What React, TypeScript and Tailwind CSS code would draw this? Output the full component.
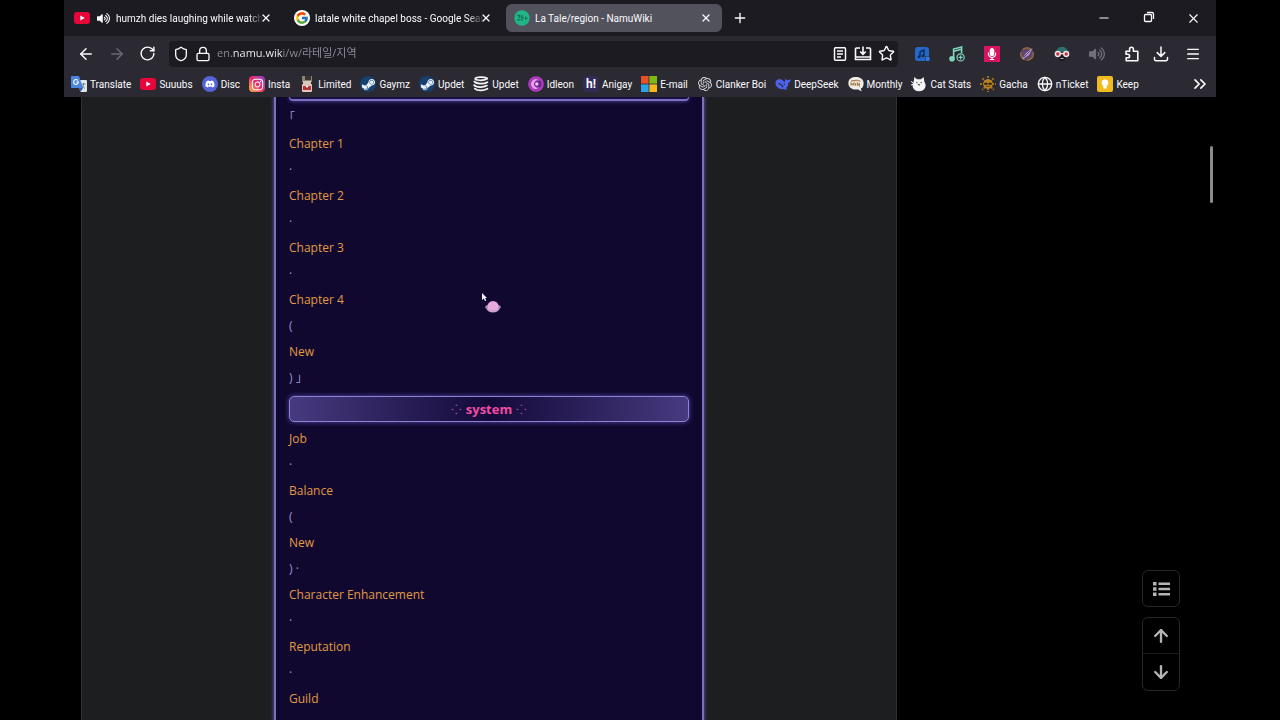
import React from 'react';
import {
  ArrowDown,
  ArrowLeft,
  ArrowRight,
  ArrowUp,
  ChevronsRight,
  Globe,
  Lock,
  Menu,
  Minus,
  Plus,
  RotateCw,
  Shield,
  Star,
  X,
} from 'lucide-react';
import { FaDiscord, FaInstagram, FaMicrophone, FaSteamSymbol, FaVolumeUp } from 'react-icons/fa';
import { FcGoogle } from 'react-icons/fc';
import { SiOpenai } from 'react-icons/si';

interface Bookmark {
  label: string;
  icon: React.ReactNode;
}

interface Extension {
  label: string;
  icon: React.ReactNode;
}

const YoutubeIcon: React.FC = () => (
  <svg viewBox="0 0 16 16" className="size-4 shrink-0">
    <rect x="0" y="2" width="16" height="12" rx="3" fill="#e8053a" />
    <path d="M6.3 5.4v5.2L10.8 8z" fill="#fff" />
  </svg>
);

const NamuIcon: React.FC = () => (
  <svg viewBox="0 0 16 16" className="size-4 shrink-0">
    <circle cx="8" cy="8" r="7.7" fill="#22b585" />
    <path
      d="M3.2 5.4h2.6v1.8H4.2M3.2 9.6c1.4.8 2.6.5 2.8-.8M8 5v6M8 7.6h2M11.6 6.6v3.4M11.6 8.3h2"
      fill="none"
      stroke="#14735a"
      strokeWidth="1.2"
    />
  </svg>
);

const TranslateIcon: React.FC = () => (
  <svg viewBox="0 0 16 16" className="size-4 shrink-0">
    <path d="M6 4h9a1 1 0 0 1 1 1v10a1 1 0 0 1-1 1H9.5z" fill="#dfe4ea" />
    <path d="M1 0h7l4 12H1a1 1 0 0 1-1-1V1a1 1 0 0 1 1-1z" fill="#4a86e0" />
    <path d="M6.9 4.5A2.4 2.4 0 1 0 7.4 6H5.2" fill="none" stroke="#fff" strokeWidth="1.1" />
    <path
      d="M10.5 8h4M12.5 7v1c0 2-1 3.4-2 4.2M11.2 9.4c.5 1.3 1.6 2.3 2.8 3"
      fill="none"
      stroke="#607080"
      strokeWidth=".8"
    />
    <path d="M9.5 16 12 12H8.3z" fill="#2f5fb3" />
  </svg>
);

const DiscordIcon: React.FC = () => (
  <span className="flex size-4 shrink-0 items-center justify-center rounded-full bg-[#5662d8]">
    <FaDiscord size={10} color="#ffffff" />
  </span>
);

const InstaIcon: React.FC = () => (
  <span className="flex size-4 shrink-0 items-center justify-center rounded bg-linear-to-tr from-[#fdb13a] via-[#ec2368] to-[#8a35d2]">
    <FaInstagram size={13} color="#ffffff" />
  </span>
);

const LimitedIcon: React.FC = () => (
  <svg viewBox="0 0 16 16" className="size-4 shrink-0">
    <rect x="3" y="0" width="10" height="6" fill="#8d8478" />
    <rect x="6" y="0" width="6" height="4" fill="#3a3430" />
    <rect x="4" y="5" width="8" height="3" fill="#d9c9ba" />
    <rect x="3" y="8" width="10" height="8" rx="1" fill="#e6c5bd" />
    <path d="M4 10h3l1 1.5L9 10h3v4H4z" fill="#b53535" />
    <path d="M6.5 10h3L8 12z" fill="#fff" />
  </svg>
);

const SteamIcon: React.FC = () => (
  <span className="flex size-4 shrink-0 items-center justify-center rounded-full bg-[#16406f]">
    <FaSteamSymbol size={15} color="#e9f1fa" />
  </span>
);

const StackIcon: React.FC = () => (
  <svg viewBox="0 0 16 16" className="size-4 shrink-0" fill="none" stroke="#f4f4f6" strokeLinecap="round">
    <path d="M14.2 2.2C10.500.6 3.400 1 2.200 2.600c-.8 2 8.600 2.400 12 .2" strokeWidth="1.700" />
    <path d="M1.400 5.600c1.600 2.400 9.200 2.800 13 .6" strokeWidth="1.800" />
    <path d="M1.200 9.200c2 2.400 9.200 2.600 12.600.4" strokeWidth="1.800" />
    <path d="M1.800 12.600c2.600 2.400 8.800 2.400 12.600.2" strokeWidth="1.800" />
  </svg>
);

const IdleonIcon: React.FC = () => (
  <svg viewBox="0 0 16 16" className="size-4 shrink-0">
    <circle cx="8" cy="8" r="7.8" fill="#b53cc4" />
    <circle cx="8" cy="8" r="5.6" fill="#6d2490" />
    <path d="M11.8 5A5 5 0 1 0 12 10.8 3.6 3.6 0 1 1 11.8 5z" fill="#ee9af0" />
    <circle cx="8.8" cy="8" r="1.7" fill="#f5c8f7" />
  </svg>
);

const AnigayIcon: React.FC = () => (
  <span className="flex size-4 shrink-0 items-center justify-center rounded-sm bg-[#332a58] text-xs leading-none font-bold text-white">
    h!
  </span>
);

const MicrosoftIcon: React.FC = () => (
  <svg viewBox="0 0 16 16" className="size-4 shrink-0">
    <rect width="7.6" height="7.6" fill="#e8502a" />
    <rect x="8.4" width="7.6" height="7.6" fill="#7db917" />
    <rect y="8.4" width="7.6" height="7.6" fill="#2ba1ea" />
    <rect x="8.4" y="8.4" width="7.6" height="7.6" fill="#f9b719" />
  </svg>
);

const WhaleIcon: React.FC = () => (
  <svg viewBox="0 0 16 16" className="size-4 shrink-0">
    <path
      d="M.5 6.5C1 3.6 4 2.6 6.6 3.8c1.4.6 2 1.6 3.2 2.4.4-1.2 0-2.6.6-3.6.6 1.2 1.4 1.8 2.6 1.6.9-.2 1.6-.8 2.8-.6-.2 1.8-1.2 3-2.6 3.4.2 2.4-.8 4.2-2.2 5.2.4.6 1 .9 1.4 1.2-1.2.5-2.4.2-3.2-.3C5 14 .2 11 .5 6.5z"
      fill="#4d63ee"
    />
    <path d="M3.4 7.4c2 .2 3.6 2 4.8 3.8" fill="none" stroke="#2b2a33" strokeWidth="1.2" />
    <circle cx="9.3" cy="8.3" r=".8" fill="#2b2a33" />
  </svg>
);

const MonthlyIcon: React.FC = () => (
  <svg viewBox="0 0 16 16" className="size-4 shrink-0">
    <path
      d="M8 1c4.4 0 7.6 2.4 7.6 6s-1.2 5-2.8 5.6l.8 2.8-3.4-2C4.2 14.2.4 11.600.4 7.200S3.600 1 8 1z"
      fill="#f1ece6"
    />
    <path
      d="M3 5.4c1.6-1.4 3-.4 4.6-1 2-.6 3.6.2 5 1.2M3 9.800V7l1.600 1.600L6 7v2.800M7.600 7v2.800M9.400 9.800V7l2 2.800V7"
      fill="none"
      stroke="#a8814f"
      strokeWidth="1.1"
    />
  </svg>
);

const CatIcon: React.FC = () => (
  <svg viewBox="0 0 16 16" className="size-4 shrink-0">
    <path
      d="M3.400 1 6 3.200h4L12.600 1l.8 5c1.200 1.600 1.600 3.600.8 5.600-.9 2.400-3 3.600-6.200 3.600s-5.200-1.200-6-3.600C1.200 9.600 1.600 7.600 2.600 6z"
      fill="#f5f5f5"
    />
    <path d="M5 6.600h1.600M9.400 6.600H11M7.200 8.400h1.600L8 9.400z" fill="#444" stroke="#444" strokeWidth=".8" />
    <path d="M0 5.400 2.400 7M0 9l2-.6" stroke="#f5f5f5" strokeWidth="1" />
  </svg>
);

const GachaIcon: React.FC = () => (
  <svg viewBox="0 0 16 16" className="size-4 shrink-0">
    <path
      d="M8 0v16M0 8h16M2.300 2.300l11.400 11.400M13.700 2.300 2.300 13.700"
      stroke="#9c6d20"
      strokeWidth="2"
      strokeDasharray="2 1"
    />
    <circle cx="8" cy="8" r="4.8" fill="#b98326" />
    <path
      d="M4.600 7h2.600v1.600H4.600zM8.800 7h2.600v1.600H8.800zM6 10.400h4"
      fill="#2d2110"
      stroke="#2d2110"
      strokeWidth=".6"
    />
  </svg>
);

const KeepIcon: React.FC = () => (
  <svg viewBox="0 0 16 16" className="size-4 shrink-0">
    <rect width="16" height="16" rx="2" fill="#f0bb20" />
    <circle cx="8" cy="6.8" r="3.3" fill="#fff" />
    <path d="M6.4 9.5h3.2v3H6.4z" fill="#fff" />
  </svg>
);

const BOOKMARKS: Bookmark[] = [
  { label: 'Translate', icon: <TranslateIcon /> },
  { label: 'Suuubs', icon: <YoutubeIcon /> },
  { label: 'Disc', icon: <DiscordIcon /> },
  { label: 'Insta', icon: <InstaIcon /> },
  { label: 'Limited', icon: <LimitedIcon /> },
  { label: 'Gaymz', icon: <SteamIcon /> },
  { label: 'Updet', icon: <SteamIcon /> },
  { label: 'Updet', icon: <StackIcon /> },
  { label: 'Idleon', icon: <IdleonIcon /> },
  { label: 'Anigay', icon: <AnigayIcon /> },
  { label: 'E-mail', icon: <MicrosoftIcon /> },
  { label: 'Clanker Boi', icon: <SiOpenai size={14} color="#d6d6da" className="mx-px shrink-0" /> },
  { label: 'DeepSeek', icon: <WhaleIcon /> },
  { label: 'Monthly', icon: <MonthlyIcon /> },
  { label: 'Cat Stats', icon: <CatIcon /> },
  { label: 'Gacha', icon: <GachaIcon /> },
  { label: 'nTicket', icon: <Globe size={16} className="shrink-0" /> },
  { label: 'Keep', icon: <KeepIcon /> },
];

const EXTENSIONS: Extension[] = [
  {
    label: 'Music finder',
    icon: (
      <svg viewBox="0 0 16 16" className="size-4">
        <path d="M4 1h8a3 3 0 0 1 3 3v6h-4v5H4a3 3 0 0 1-3-3V4a3 3 0 0 1 3-3z" fill="#2468c8" />
        <rect x="11.5" y="10.5" width="4" height="4.5" rx="1" fill="#2d7ae6" />
        <path d="M6 10.500V6l4-2v5.500" fill="none" stroke="#112c58" strokeWidth="1.4" />
        <circle cx="5" cy="10.8" r="1.5" fill="#112c58" />
        <circle cx="9" cy="9.8" r="1.5" fill="#112c58" />
      </svg>
    ),
  },
  {
    label: 'Add song',
    icon: (
      <svg viewBox="0 0 16 16" className="size-4" fill="none" stroke="#7fd6bf" strokeWidth="1.6">
        <path d="M4.600 12.500V3l8-2v6" />
        <path d="M4.600 5.200l8-2" />
        <circle cx="3" cy="12.8" r="2" fill="#7fd6bf" />
        <circle cx="11.6" cy="11.4" r="3.6" strokeWidth="1.2" />
        <path d="M11.600 9.400v4M9.600 11.400h4" strokeWidth="1.2" />
      </svg>
    ),
  },
  {
    label: 'Recorder',
    icon: (
      <span className="flex size-4 items-center justify-center bg-[#d81460]">
        <FaMicrophone size={12} color="#ffffff" />
      </span>
    ),
  },
  {
    label: 'Styler',
    icon: (
      <svg viewBox="0 0 16 16" className="size-4">
        <circle cx="8" cy="8" r="6.8" fill="#5e4569" />
        <circle cx="8" cy="8" r="6.2" fill="none" stroke="#a0702c" strokeWidth="1.3" strokeDasharray="9 3" />
        <path d="M3 13.500 7 7l6.500-5L10 9z" fill="#b9a0d8" />
        <path d="M5 11l6-6" stroke="#51407c" strokeWidth="1" />
      </svg>
    ),
  },
  {
    label: 'Incognito helper',
    icon: (
      <svg viewBox="0 0 16 16" className="size-4">
        <path d="M2 6C2.600 2.600 5 .8 8 .8s5.400 1.800 6 5.200z" fill="#2c6f6d" />
        <path d="M4 9h8c0 3.500-1.600 6-4 6s-4-2.500-4-6z" fill="#17191d" />
        <path d="M6.500 12.500h3" stroke="#c9b8b0" strokeWidth="1" />
        <circle cx="3.800" cy="8" r="2.400" fill="#c43545" stroke="#f1dede" strokeWidth="1.500" />
        <circle cx="12.200" cy="8" r="2.400" fill="#c43545" stroke="#f1dede" strokeWidth="1.500" />
        <path d="M6 7.600h4" stroke="#f1dede" strokeWidth="1.400" />
      </svg>
    ),
  },
  { label: 'Volume', icon: <FaVolumeUp size={16} color="#707078" /> },
  {
    label: 'Extensions',
    icon: (
      <svg
        viewBox="0 0 16 16"
        className="size-4"
        fill="none"
        stroke="currentColor"
        strokeWidth="1.6"
        strokeLinejoin="round"
      >
        <path d="M2 8V5.200h3.600V3.200a1.900 1.900 0 0 1 3.800 0v2h4.400v9.600H2.200v-3h1.600a1.800 1.800 0 0 0 0-3.600H2z" />
      </svg>
    ),
  },
];

const CHAPTER_ROWS = ['｢', 'Chapter 1', '·', 'Chapter 2', '·', 'Chapter 3', '·', 'Chapter 4', '(', 'New', ') ｣'];

const SYSTEM_ROWS = [
  'Job',
  '·',
  'Balance',
  '(',
  'New',
  ') ·',
  'Character Enhancement',
  '·',
  'Reputation',
  '·',
  'Guild',
];

const WikiRows: React.FC<{ rows: string[] }> = ({ rows }) => (
  <div>
    {rows.map((row, i) => (
      <div key={i} className="h-[26px] leading-[26px] text-[#a58fd0]">
        {/^[A-Z]/.test(row) ? (
          <a href="#" className="text-[#e09a45]">
            {row}
          </a>
        ) : (
          row
        )}
      </div>
    ))}
  </div>
);

const BrowserTab: React.FC<{ title: string; icon: React.ReactNode; active?: boolean }> = ({ title, icon, active }) => (
  <div
    className={`flex h-7 w-[216px] min-w-0 items-center rounded-md pr-2.5 pl-2 ${active ? 'bg-[#52525d]' : ''}`}
  >
    <button type="button" className="flex min-w-0 flex-1 items-center gap-[5px]">
      {icon}
      <span className={`flex-1 text-left whitespace-nowrap ${active ? '' : 'mask-r-from-90%'}`}>{title}</span>
    </button>
    <button type="button" aria-label={`Close ${title}`} className="shrink-0">
      <X size={12} strokeWidth={2.5} />
    </button>
  </div>
);

const TabStrip: React.FC = () => (
  <div className="flex h-9 items-center bg-[#1c1b22] pl-0.5 text-[10px]">
    <div className="flex min-w-0 gap-1">
      <BrowserTab
        title="humzh dies laughing while watch"
        icon={
          <>
            <YoutubeIcon />
            <FaVolumeUp size={13} className="mr-px ml-0.5 shrink-0" />
          </>
        }
      />
      <BrowserTab
        title="latale white chapel boss - Google Sear"
        icon={<FcGoogle size={16} className="shrink-0 rounded-full bg-white p-px" />}
      />
      <BrowserTab title="La Tale/region - NamuWiki" icon={<NamuIcon />} active />
    </div>
    <button type="button" aria-label="New tab" className="ml-2.5">
      <Plus size={16} />
    </button>
    <div className="ml-auto flex">
      <button type="button" aria-label="Minimize" className="flex w-[45px] justify-center">
        <Minus size={14} />
      </button>
      <button type="button" aria-label="Restore" className="flex w-[45px] justify-center">
        <svg viewBox="0 0 12 12" className="size-3" fill="none" stroke="currentColor" strokeWidth="1.3">
          <rect x="1.5" y="3.5" width="7" height="7" rx="1" />
          <path d="M4 1.500h5a1.500 1.500 0 0 1 1.500 1.500v5" />
        </svg>
      </button>
      <button type="button" aria-label="Close window" className="flex w-[45px] justify-center">
        <X size={15} strokeWidth={1.8} />
      </button>
    </div>
  </div>
);

const Toolbar: React.FC = () => (
  <div className="flex h-[35px] items-center bg-[#2b2a33] pr-2 pl-1.5">
    <button type="button" aria-label="Back" className="flex w-[31px] justify-center">
      <ArrowLeft size={18} />
    </button>
    <button type="button" aria-label="Forward" disabled className="flex w-[31px] justify-center text-[#6b6a73]">
      <ArrowRight size={18} />
    </button>
    <button type="button" aria-label="Reload" className="flex w-[31px] justify-center">
      <RotateCw size={17} />
    </button>
    <div className="ml-1.5 flex h-[26px] flex-1 items-center gap-1.5 rounded bg-[#1c1b22] pr-[3px] pl-1">
      <Shield size={16} className="shrink-0" />
      <Lock size={16} className="shrink-0" />
      <input
        type="text"
        aria-label="Address"
        defaultValue="en.namu.wiki/w/라테일/지역"
        className="min-w-0 flex-1 bg-[linear-gradient(90deg,#8f8f9d_15px,#fbfbfe_15px,#fbfbfe_66px,#8f8f9d_66px)] bg-clip-text font-['Open_Sans','Noto_Sans_CJK_KR',sans-serif] text-[11px] text-transparent outline-none"
      />
      <button type="button" aria-label="Reader view">
        <svg viewBox="0 0 16 16" className="size-4" fill="none" stroke="currentColor" strokeWidth="1.5">
          <rect x="2.5" y="1.8" width="11" height="12.4" rx="1" />
          <path d="M5 5h6M5 8h6M5 11h4" />
        </svg>
      </button>
      <button type="button" aria-label="Save page">
        <svg viewBox="0 0 18 16" className="h-4 w-[18px]" fill="none" stroke="currentColor" strokeWidth="1.6">
          <path d="M6 2H2.500a1 1 0 0 0-1 1v10.500h15V3a1 1 0 0 0-1-1H12M9 .5V8M6.200 5.500 9 8.300l2.800-2.800M1.500 11h15" />
        </svg>
      </button>
      <button type="button" aria-label="Bookmark this page">
        <Star size={17} />
      </button>
    </div>
    <div className="ml-1.5 flex">
      {EXTENSIONS.map(({ label, icon }) => (
        <button key={label} type="button" aria-label={label} className="flex w-[35px] justify-center">
          {icon}
        </button>
      ))}
    </div>
    <button type="button" aria-label="Downloads" className="flex w-6 justify-center">
      <svg
        viewBox="0 0 16 16"
        className="size-4"
        fill="none"
        stroke="currentColor"
        strokeWidth="1.5"
        strokeLinecap="round"
        strokeLinejoin="round"
      >
        <path d="M8 1v9M4.200 6.600 8 10.400l3.800-3.800M1.500 11.500v1.700a1.500 1.500 0 0 0 1.500 1.500h10a1.500 1.500 0 0 0 1.500-1.500v-1.700" />
      </svg>
    </button>
    <button type="button" aria-label="Menu" className="ml-1 flex w-[31px] justify-center">
      <Menu size={16} />
    </button>
  </div>
);

const BookmarksBar: React.FC = () => (
  <nav
    aria-label="Bookmarks"
    className="flex h-[26px] items-center gap-[9px] bg-[#2b2a33] pr-1.5 pl-[7px] text-[10px]"
  >
    {BOOKMARKS.map(({ label, icon }, i) => (
      <a key={i} href="#" className="flex items-center gap-[3px] whitespace-nowrap">
        {icon}
        {label}
      </a>
    ))}
    <button type="button" aria-label="More bookmarks" className="ml-auto">
      <ChevronsRight size={20} />
    </button>
  </nav>
);

const App: React.FC = () => (
  <div className="h-screen overflow-hidden bg-black px-16 text-[#fbfbfe]">
    <div className="flex h-full flex-col">
      <header className="shrink-0 font-[Roboto,'Noto_Sans_CJK_KR',sans-serif]">
        <TabStrip />
        <Toolbar />
        <BookmarksBar />
      </header>

      <main className="flex min-h-0 flex-1 pl-[17px] font-['Open_Sans','Noto_Sans_CJK_KR',sans-serif]">
        <article className="flex min-w-0 flex-1 justify-center overflow-hidden border-x border-[#303135] bg-[#1c1e20]">
          <div className="relative w-[430px] self-start border-x-2 border-[#7b70bb] bg-[#10082f] px-[13px] pb-6 text-xs shadow-[0_0_4px_#6a5cb8]">
            <div className="mb-1 h-1 rounded-b border-x border-b-2 border-[#7b6fc0] bg-[#1a1046] shadow-[0_0_4px_#5a4bb0]" />
            <WikiRows rows={CHAPTER_ROWS} />
            <h2 className="mt-[5px] mb-1 flex h-[26px] items-center justify-center gap-1 rounded-[5px] border border-[#8d82cf] bg-linear-to-r from-[#483a80] via-[#140a3a] to-[#483a80] pt-0.5 text-[13px] font-bold text-[#f04ca6] shadow-[0_0_5px_#5a4bb0]">
              <span className="font-normal text-[#a04a9a]">⁘</span>
              system
              <span className="font-normal text-[#a04a9a]">⁘</span>
            </h2>
            <WikiRows rows={SYSTEM_ROWS} />

            {/* mouse pointer with a small planet */}
            <svg viewBox="0 0 20 22" className="absolute top-[195px] left-[205px] h-[22px] w-5">
              <path d="M1 1v7l1.800-1.500L4 9l1.200-.6L4.200 6H6z" fill="#f4f1ff" />
              <ellipse cx="12" cy="15" rx="8" ry="3" fill="#9b87b4" />
              <circle cx="12" cy="14.5" r="5.5" fill="#e9a9df" />
              <path d="M5 16c3 2.400 11 2.400 14 0-1 3-4 4.500-7 4.500S6 19 5 16z" fill="#c9a4d4" />
            </svg>
          </div>
        </article>

        <aside className="flex w-[319px] shrink-0 items-end justify-end gap-[30px]">
          <div className="mb-[29px] flex flex-col gap-2.5 text-[#b4b4b4]">
            <button
              type="button"
              aria-label="Contents"
              className="flex h-[37px] w-[38px] items-center justify-center rounded-md border border-[#262626]"
            >
              <svg viewBox="0 0 17 14" className="h-3.5 w-[17px]" fill="currentColor">
                <path d="M0 0h3.500v3.500H0zM0 5.250h3.500v3.500H0zM0 10.500h3.500V14H0zM5.500.6H17v2.300H5.500zM5.500 5.850H17v2.300H5.500zM5.500 11.100H17v2.300H5.500z" />
              </svg>
            </button>
            <div className="flex flex-col rounded-md border border-[#262626]">
              <button
                type="button"
                aria-label="Scroll to top"
                className="flex h-9 w-9 items-center justify-center border-b border-[#1c1c1c]"
              >
                <ArrowUp size={20} strokeWidth={2.8} />
              </button>
              <button type="button" aria-label="Scroll to bottom" className="flex h-9 w-9 items-center justify-center">
                <ArrowDown size={20} strokeWidth={2.8} />
              </button>
            </div>
          </div>
          <div className="mt-[49px] mr-[3px] h-[57px] w-[3px] self-start rounded bg-[#8c8c8c]" />
        </aside>
      </main>
    </div>
  </div>
);

export default App;
